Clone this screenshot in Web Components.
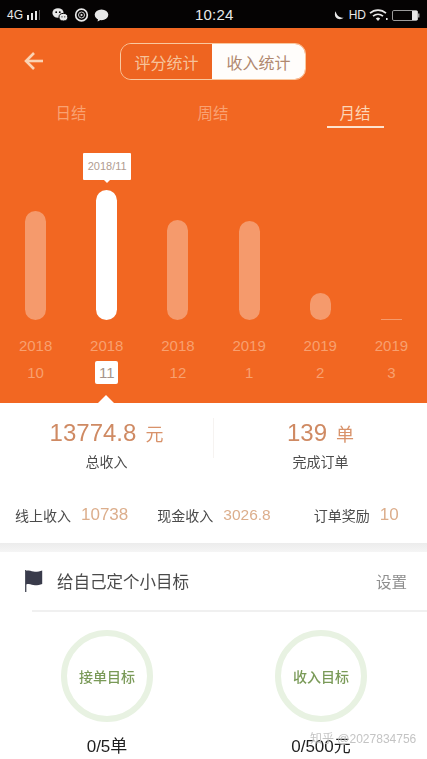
<!DOCTYPE html>
<html lang="zh">
<head>
<meta charset="utf-8">
<title>收入统计</title>
<style>
    html, body { margin: 0; height: 759px; overflow: hidden; background: #fff; }
    body { font-family: "Noto Sans CJK SC", "Liberation Sans", sans-serif; }
</style>
</head>
<body>
<income-page></income-page>

<script>
const FONT = `"Liberation Sans", "Noto Sans CJK SC", sans-serif`;

class StatusBar extends HTMLElement {
    constructor() {
        super();
        this.attachShadow({ mode: 'open' }).innerHTML = `
        <style>
            :host { display: flex; align-items: center; height: 28px; background: #050303; color: #e8e8e8; font-family: ${FONT}; padding: 2px 7px 0 7px; box-sizing: border-box; position: relative; }
            .net { font-size: 12px; width: 20px; }
            .left { display: flex; align-items: center; flex: 1; }
            .time { position: absolute; left: 195px; top: 6px; font-size: 15px; line-height: 18px; letter-spacing: .2px; }
            .right { display: flex; align-items: center; gap: 3px; font-size: 12px; }
            svg { display: block; fill: currentColor; }
        </style>
        <div class="left">
            <span class="net">4G</span>
            <svg width="14" height="10" viewBox="0 0 14 10"><rect x="0" y="5" width="2" height="5"/><rect x="4" y="3" width="2" height="7"/><rect x="8" y="1" width="2" height="9"/><rect x="12" y="0" width="1" height="10" opacity=".35"/></svg>
            <svg style="margin-left:11px" width="16" height="14" viewBox="0 0 16 14"><ellipse cx="6" cy="5" rx="5.6" ry="4.8"/><circle cx="4.2" cy="4.2" r=".9" fill="#050303"/><circle cx="7.8" cy="4.2" r=".9" fill="#050303"/><ellipse cx="11.4" cy="9.2" rx="4.4" ry="3.8" stroke="#050303"/><circle cx="10" cy="8.8" r=".6" fill="#050303"/><circle cx="12.8" cy="8.8" r=".6" fill="#050303"/></svg>
            <svg style="margin-left:6px" width="15" height="14" viewBox="0 0 15 14"><circle cx="7.5" cy="7" r="5.8" fill="none" stroke="currentColor" stroke-width="1.7"/><circle cx="7.5" cy="7" r="3" fill="none" stroke="currentColor" stroke-width=".9"/><path d="M6.6 5.4 9.2 7 6.6 8.6z"/></svg>
            <svg style="margin-left:5px" width="15" height="13" viewBox="0 0 15 13"><ellipse cx="7.500" cy="5.800" rx="6.800" ry="5.400"/><path d="M4 9.500 3.600 12.600 7.400 10.600z"/></svg>
        </div>
        <span class="time">10:24</span>
        <div class="right">
            <svg width="10" height="10" viewBox="0 0 10 10"><path d="M1.600 1.200C2.400 5 5 7.600 9.600 7.800 7.800 9.600 4 9.800 2 7.600.6 6 .5 3 1.600 1.200z"/></svg>
            <span style="margin-left:2px">HD</span>
            <svg width="19" height="14" viewBox="0 0 19 14"><g fill="none" stroke="currentColor" stroke-width="1.7"><path d="M1 5.200C5.600 1 12.400 1 17 5.200"/><path d="M4 8.200C7 5.600 11 5.600 14 8.200"/></g><path d="M6.800 10.400C8.400 9.200 9.600 9.200 11.200 10.400L9 13z"/><rect x="17" y="10" width="1.600" height="2"/></svg>
            <svg width="29" height="13" viewBox="0 0 29 13"><rect x="1.500" y="1.500" width="25" height="10" rx="1.400" fill="none" stroke="#9c9c9c" stroke-width="1"/><rect x="21" y="2" width="5.500" height="9"/><rect x="27" y="4.500" width="1.500" height="4" fill="#9c9c9c"/></svg>
        </div>`;
    }
}

class IncomeHeader extends HTMLElement {
    constructor() {
        super();
        this.attachShadow({ mode: 'open' }).innerHTML = `
        <style>
            :host { display: block; padding-top: 15px; position: relative; }
            .back { position: absolute; left: 23px; top: 23px; display: block; }
            .seg { width: 186px; height: 37px; margin: 0 0 0 120px; box-sizing: border-box; display: flex; border: 1.5px solid #f9c9a0; border-radius: 11px; overflow: hidden; font-size: 16px; }
            .seg span { display: flex; align-items: center; justify-content: center; }
            .off { width: 91px; color: #f6c39b; background: #ee6420; }
            .on { flex: 1; color: #b0886f; background: #fffdfb; }
        </style>
        <svg class="back" width="21" height="20" viewBox="0 0 21 20" fill="none" stroke="#fbd3b4" stroke-width="2.6"><path d="M20 10H3"/><path d="M11 2 3 10l8 8"/></svg>
        <div class="seg"><span class="off">评分统计</span><span class="on">收入统计</span></div>`;
    }
}

class PeriodTabs extends HTMLElement {
    constructor() {
        super();
        this.attachShadow({ mode: 'open' }).innerHTML = `
        <style>
            :host { display: grid; grid-template-columns: repeat(3, 142px); height: 48px; font-size: 15.5px; color: #f9a272; }
            div { display: flex; justify-content: center; padding-top: 21px; line-height: 22px; box-sizing: border-box; position: relative; }
            .on { color: #fcd7b8; }
            .on::after { content: ""; position: absolute; left: 43px; right: 42px; top: 46px; height: 2px; background: #fde3cf; }
        </style>
        <div>日结</div><div>周结</div><div class="on">月结</div>`;
    }
}

class ChartCol extends HTMLElement {
    constructor() {
        super();
        const h = this.getAttribute('h');
        const on = this.hasAttribute('active');
        const flat = Number(h) < 3;
        this.attachShadow({ mode: 'open' }).innerHTML = `
        <style>
            :host { display: flex; flex-direction: column; align-items: center; position: relative; font-family: ${FONT}; color: #f8a06f; font-size: 15px; }
            .plot { height: 192px; display: flex; align-items: flex-end; }
            .bar { width: 21px; height: ${h}px; border-radius: ${flat ? 0 : 10.5}px; background: ${on ? '#fff' : '#f59a6c'}; }
            .year { margin-top: 17px; line-height: 18px; }
            .month { margin-top: 6px; min-width: 23px; height: 23px; line-height: 23px; text-align: center; border-radius: 2px; font-size: 15px; }
            .active { background: #fff; color: #a6948a; }
            .tip { position: absolute; top: 25px; left: 12px; width: 48px; height: 27px; background: #fff; border-radius: 1px; color: #b09c90; font-size: 11px; line-height: 27px; text-align: center; }
            .tip::after { content: ""; position: absolute; left: 20px; top: 26px; border: 4px solid transparent; border-top-color: #fff; border-bottom: 0; }
            .caret { position: absolute; left: 27px; top: 267px; border: 8px solid transparent; border-bottom-color: #fff; border-top: 0; }
        </style>
        ${on ? `<div class="tip">${this.getAttribute('tip')}</div>` : ''}
        <div class="plot"><div class="bar"></div></div>
        <div class="year">${this.getAttribute('year')}</div>
        <div class="month ${on ? 'active' : ''}">${this.getAttribute('month')}</div>
        ${on ? `<div class="caret"></div>` : ''}`;
    }
}

class BarChart extends HTMLElement {
    constructor() {
        super();
        this.attachShadow({ mode: 'open' }).innerHTML = `
        <style>
            :host { display: grid; grid-template-columns: repeat(6, 1fr); height: 275px; }
        </style>
        <slot></slot>`;
    }
}

class SummaryStat extends HTMLElement {
    constructor() {
        super();
        this.attachShadow({ mode: 'open' }).innerHTML = `
        <style>
            :host { display: flex; flex-direction: column; align-items: center; }
            .val { font-family: ${FONT}; font-size: 24px; line-height: 30px; color: #cf8a63; white-space: nowrap; }
            .unit { font-family: "Noto Sans CJK SC", sans-serif; font-size: 18px; margin-left: 9px; color: #d8926a; }
            .label { font-size: 14px; line-height: 20px; margin-top: 3px; color: #4c4c4c; }
        </style>
        <div class="val">${this.getAttribute('value')}<span class="unit">${this.getAttribute('unit')}</span></div>
        <div class="label">${this.getAttribute('label')}</div>`;
    }
}

class RowStat extends HTMLElement {
    constructor() {
        super();
        this.attachShadow({ mode: 'open' }).innerHTML = `
        <style>
            :host { display: flex; align-items: center; gap: 10px; white-space: nowrap; }
            .label { font-size: 14px; color: #4a4a4a; }
            .val { font-family: ${FONT}; font-size: var(--val-size, 17px); color: #dcae8c; }
        </style>
        <span class="label">${this.getAttribute('label')}</span><span class="val">${this.getAttribute('value')}</span>`;
    }
}

class IncomeSummary extends HTMLElement {
    constructor() {
        super();
        this.attachShadow({ mode: 'open' }).innerHTML = `
        <style>
            :host { display: block; }
            .top { display: grid; grid-template-columns: 213px 1fr; height: 73px; padding-top: 15px; box-sizing: border-box; }
            .top summary-stat + summary-stat { border-left: 1px solid #f6f3f1; height: 40px; }
            .row { display: flex; height: 67px; padding: 10px 0 0 15px; box-sizing: border-box; align-items: center; }
            .row row-stat:nth-child(2) { margin-left: 29px; --val-size: 15.5px; }
            .row row-stat:nth-child(3) { margin-left: 43px; }
            .gap { height: 9px; background: linear-gradient(#ececec, #f5f5f5); }
        </style>
        <div class="top">
            <summary-stat value="13774.8" unit="元" label="总收入"></summary-stat>
            <summary-stat value="139" unit="单" label="完成订单"></summary-stat>
        </div>
        <div class="row">
            <row-stat label="线上收入" value="10738"></row-stat>
            <row-stat label="现金收入" value="3026.8"></row-stat>
            <row-stat label="订单奖励" value="10"></row-stat>
        </div>
        <div class="gap"></div>`;
    }
}

class GoalRing extends HTMLElement {
    constructor() {
        super();
        this.attachShadow({ mode: 'open' }).innerHTML = `
        <style>
            :host { display: flex; flex-direction: column; align-items: center; }
            .ring { width: 92px; height: 92px; box-sizing: border-box; border: 6px solid #e8f2e2; border-radius: 50%; display: flex; align-items: center; justify-content: center; font-size: 14px; font-weight: 500; color: #7a9a58; }
            .val { font-family: ${FONT}; font-size: 17px; line-height: 22px; margin-top: 14px; color: #1f1f1f; white-space: nowrap; }
        </style>
        <div class="ring">${this.getAttribute('label')}</div>
        <div class="val">${this.getAttribute('value')}</div>`;
    }
}

class GoalSection extends HTMLElement {
    constructor() {
        super();
        this.attachShadow({ mode: 'open' }).innerHTML = `
        <style>
            :host { display: block; position: relative; }
            .head { display: flex; align-items: center; height: 58px; padding: 0 20px 0 24px; color: #4a4a4a; }
            .head svg { display: block; margin-right: 13px; }
            .title { flex: 1; font-size: 16.5px; }
            .set { font-size: 15.5px; color: #8f8f8f; }
            .line { height: 2px; margin-left: 32px; background: #f0f0f0; }
            .rings { display: grid; grid-template-columns: repeat(2, 214px); padding-top: 18px; }
            .mark { position: absolute; left: 310px; top: 180px; font-size: 12px; line-height: 14px; color: #c4c4c4; font-family: ${FONT}; white-space: nowrap; }
        </style>
        <div class="head">
            <svg width="20" height="22" viewBox="0 0 20 22"><path d="M1 0h1.400v22H1z" fill="#50535f"/><path d="M2 1c4-1.400 6 .8 9 .8 2.800 0 5-.6 7.200-1.300v13.400c-2.200.8-4.400 1.300-7.200 1.300-3 0-5-2.200-9-.8z" fill="#393b4b"/></svg>
            <span class="title">给自己定个小目标</span>
            <span class="set">设置</span>
        </div>
        <div class="line"></div>
        <div class="rings">
            <goal-ring label="接单目标" value="0/5单"></goal-ring>
            <goal-ring label="收入目标" value="0/500元"></goal-ring>
        </div>
        <span class="mark">知乎 @2027834756</span>`;
    }
}

class IncomePage extends HTMLElement {
    constructor() {
        super();
        this.attachShadow({ mode: 'open' }).innerHTML = `
        <style>
            :host { display: block; width: 427px; height: 759px; overflow: hidden; font-family: "Noto Sans CJK SC", "Liberation Sans", sans-serif; filter: blur(.35px); }
            .orange { background: #f26722; height: 375px; position: relative; }
        </style>
        <status-bar></status-bar>
        <div class="orange">
            <income-header></income-header>
            <period-tabs></period-tabs>
            <bar-chart>
                <chart-col h="109" year="2018" month="10"></chart-col>
                <chart-col h="130" year="2018" month="11" active tip="2018/11"></chart-col>
                <chart-col h="100" year="2018" month="12"></chart-col>
                <chart-col h="99" year="2019" month="1"></chart-col>
                <chart-col h="27" year="2019" month="2"></chart-col>
                <chart-col h="1" year="2019" month="3"></chart-col>
            </bar-chart>
        </div>
        <income-summary></income-summary>
        <goal-section></goal-section>`;
    }
}

customElements.define('status-bar', StatusBar);
customElements.define('income-header', IncomeHeader);
customElements.define('period-tabs', PeriodTabs);
customElements.define('chart-col', ChartCol);
customElements.define('bar-chart', BarChart);
customElements.define('summary-stat', SummaryStat);
customElements.define('row-stat', RowStat);
customElements.define('income-summary', IncomeSummary);
customElements.define('goal-ring', GoalRing);
customElements.define('goal-section', GoalSection);
customElements.define('income-page', IncomePage);
</script>
</body>
</html>
